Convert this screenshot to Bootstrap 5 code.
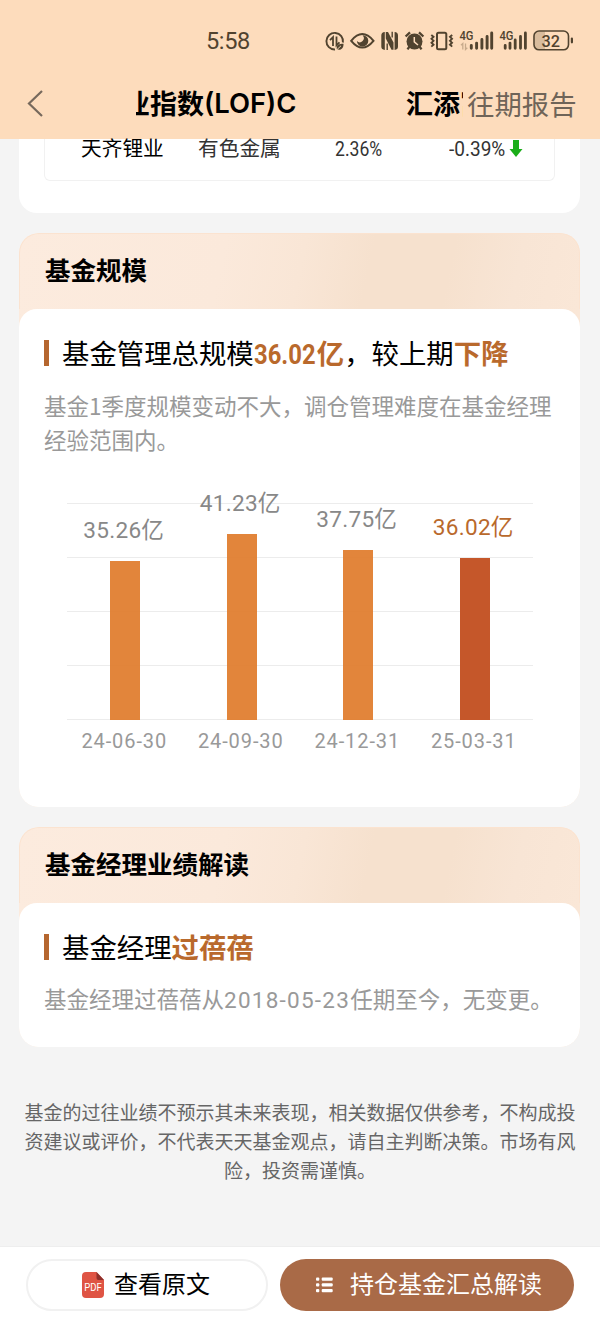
<!DOCTYPE html>
<html lang="zh-CN">
<head>
<meta charset="utf-8">
<meta name="viewport" content="width=device-width, initial-scale=1">
<title>基金季报解读</title>
<link rel="stylesheet" href="https://cdn.jsdelivr.net/npm/bootstrap@5.3.0/dist/css/bootstrap.min.css">
<style>
  body { background:#f4f4f4; color:#000; font-family:"Noto Sans CJK SC",sans-serif; height:1326px; overflow:hidden; }
  .num { font-family:Roboto,"Noto Sans CJK SC",sans-serif; }
  .accent, .val.accent { color:#b9692c; }
  .app-head { background:#fddcbc; height:139px; flex:none; }
  .status { height:78px; padding:4px 22px 0 206px; color:#51432f; }
  .clock { font-size:23.6px; line-height:24px; letter-spacing:-.4px; }
  .title-row { height:50px; padding:0 23px 0 27px; }
  .ticker { margin-left:92px; width:327px; font-size:27px; line-height:48px; font-weight:700; }
  .ticker .run { margin-left:-13px; }
  .ticker .latin { font-family:Inter,sans-serif; font-size:27.4px; font-weight:600; width:93px; flex:none; }
  .ticker .gap { width:109px; flex:none; }
  .past { font-size:27.4px; line-height:48px; color:#6f6458; margin-left:4px; }
  .panel { margin:0 20px 0 19px; border-radius:18px; background:#fff; flex:none; }
  .holdings { height:74px; border-radius:0 0 18px 18px; padding:0 25px; }
  .hold-row { height:42px; border:1px solid #f1f1f1; border-top:0; border-radius:0 0 6px 6px; font-size:20.7px; line-height:17px; color:#333; }
  .narrow { display:inline-block; transform:scaleX(.85); transform-origin:0 50%; line-height:20px; }
  .topic { border-radius:20px 20px 0 0; border:1px solid #fbe3d0; border-bottom:0; height:76px; padding:0 25px; font-size:25.5px; line-height:70px; font-weight:700;
    background:linear-gradient(102deg,#fcebde 0%,#fbe9db 36%,#f9e6d6 50%,#f6e1ce 62%,#f6e1ce 76%,#f8e5d5 88%,#fae7d7 100%); }
  .panel-topic { background:linear-gradient(90deg,#fcebde 0%,#f6e1ce 65%,#fae7d7 100%); border-radius:20px; overflow:hidden; }
  .inner { background:#fff; border-radius:18px; padding:26px 25px 0; }
  .headline { font-size:27.4px; line-height:36px; height:36px; white-space:nowrap; }
  .headline::before { content:""; width:5px; height:26px; background:#b5662f; margin-right:13px; flex:none; }
  .headline > span { margin-top:-2px; }
  .total { display:inline-block; width:63px; height:30px; line-height:30px; transform:scaleX(.87); transform-origin:0 50%; }
  .note { font-size:22.5px; line-height:34px; color:#999; white-space:nowrap; }
  .note .num { letter-spacing:1.25px; }
  .chart { margin:0 22px 0 23px; height:217px; background:repeating-linear-gradient(to bottom,#ececec 0 1px,transparent 1px 54px); }
  .column { width:30px; flex:none; background:#df7b2aeb; }
  .column.now { background:#c5572a; }
  .val { font-size:22.6px; line-height:24px; color:#888; margin-bottom:18px; letter-spacing:.25px; white-space:nowrap; position:relative; left:-1.5px; }
  .days { margin:0 23px 0 22px; font-size:20px; line-height:24px; color:#999; letter-spacing:.9px; }
  .legal { font-size:19px; line-height:29px; color:#666; text-align:center; margin:50px 24px 0; white-space:nowrap; }
  .actions { height:80px; background:#fff; border-top:1px solid #eee; padding:12px 26px 0; flex:none; }
  .actions .btn { height:52px; border-radius:26px; font-size:24px; line-height:24px; padding:0; }
  .actions .btn span { margin-top:-4px; }
  .btn-doc { width:242px; border:2px solid #f1f1f1; color:#000; background:#fff; }
  .btn-doc svg { margin-left:-2px; }
  .btn-sum { width:294px; background:#a96a47; color:#fff; border:0; }
  .btn-sum svg { margin-left:4px; }
</style>
<script src="https://cdn.jsdelivr.net/npm/bootstrap@5.3.0/dist/js/bootstrap.bundle.min.js"></script>
</head>
<body class="d-flex flex-column">
<header class="app-head">
  <div class="status d-flex align-items-center justify-content-between">
    <span class="clock num">5:58</span>
    <svg width="256" height="26" viewBox="322 27.5 256 26" fill="none" stroke="#51432f">
      <!-- data saver -->
      <path d="M342.9 42A8.3 8.3 0 1 0 335 49" stroke-width="1.9"/>
      <path d="M333 45.5V36.6L330 39.6M336.5 36V44.8L339.5 41.8" stroke-width="1.8"/>
      <path d="M336.8 48.8C336 43.8 339.3 43.4 343.5 43.2C343.7 47.5 341 50.5 336.8 48.8Z" fill="#51432f" stroke="none"/>
      <path d="M336 50L341 45.3" stroke="#fddcbc" stroke-width=".9"/>
      <!-- eye -->
      <path d="M351.2 40.3Q362.3 26.8 373.5 40.3Q362.3 53.8 351.2 40.3Z" stroke-width="2"/>
      <path d="M362.5 34.7A5.7 5.7 0 1 1 356.9 40.5A4 4 0 0 0 362.5 34.7Z" fill="#51432f" stroke="none"/>
      <!-- NFC -->
      <path d="M381.3 35Q381.3 31.6 384.8 31.4V49.4Q381.3 49.2 381.3 46ZM398 46Q398 49.2 394.6 49.4V31.4Q398 31.6 398 35ZM385.8 31.4H388L393.5 42V49.3H391.5L385.8 38Z" fill="#51432f" stroke="none"/>
      <path d="M387.2 49.5V43M392.2 31.3V37" stroke-width="1.4"/>
      <!-- alarm -->
      <circle cx="414.5" cy="41" r="8" fill="#51432f" stroke="none"/>
      <path d="M405.6 36L410 31.9M423.4 36L419 31.9M409.5 46L407.5 48.8M419.5 46L421.5 48.8" stroke-width="2.3"/>
      <path d="M414.3 36.5V41.4L418 44.5" stroke="#fddcbc" stroke-width="1.5"/>
      <!-- vibrate -->
      <rect x="437" y="32.3" width="9.3" height="16.5" rx="1.5" stroke-width="2"/>
      <path d="M431.3 34.5L433.5 36.4L431.5 38.3L433.5 40.3L431.5 42.3L433.5 44.2L431.3 46.1M452.2 34.5L450 36.4L452 38.3L450 40.3L452 42.3L450 44.2L452.2 46.1" stroke-width="1.9"/>
      <!-- signal 1 -->
      <path d="M471.3 45V47.8M476.6 42.6V47.8M481.9 39V47.8M487.1 36V47.8M491.7 32.5V47.8" stroke-width="2.9" stroke-linecap="round"/>
      <path d="M462.8 49V43L461 44.8M465.5 43V49L467.3 47.2" stroke="#c7aa8c" stroke-width="1.3"/>
      <!-- signal 2 -->
      <path d="M505.2 45V47.8M510 42.6V47.8M515.2 39.5V47.8M520.5 36V47.8M525.4 32.5V47.8" stroke-width="2.8" stroke-linecap="round"/>
      <g class="num" font-size="12" font-weight="500" fill="#51432f" stroke="none">
        <text x="459.5" y="39.5" textLength="14" lengthAdjust="spacingAndGlyphs">4G</text>
        <text x="499.5" y="39.5" textLength="14" lengthAdjust="spacingAndGlyphs">4G</text>
      </g>
      <!-- battery -->
      <path d="M545 31V49H538.5Q534.5 49 534.5 45V35Q534.5 31 538.5 31Z" fill="#d9bc9d" stroke="none"/>
      <rect x="534" y="30.5" width="34.5" height="18.8" rx="5" stroke-width="1.6"/>
      <path d="M571.9 38V41.8" stroke-width="2.2" stroke-linecap="round"/>
      <text class="num" x="541.5" y="46" font-size="17" font-weight="500" fill="#51432f" stroke="none" textLength="18.5" lengthAdjust="spacingAndGlyphs">32</text>
    </svg>
  </div>
  <div class="title-row d-flex align-items-center">
    <svg width="17" height="28" viewBox="0 0 17 28" fill="none" stroke="#77695c" stroke-width="2.2"><path d="M15 2L2 14.5L15 27"/></svg>
    <div class="ticker overflow-hidden text-nowrap flex-shrink-0"><div class="run d-flex"><span>业指数</span><span class="latin">(LOF)C</span><span class="gap"></span><span>汇添富</span></div></div>
    <span class="past text-nowrap">往期报告</span>
  </div>
</header>

<section class="panel holdings">
  <div class="hold-row d-flex">
    <span class="text-black" style="width:153px;padding-left:36px">天齐锂业</span>
    <span style="width:137px">有色金属</span>
    <span style="width:114px"><span class="num narrow">2.36%</span></span>
    <span style="width:60px"><span class="num narrow" style="transform:scaleX(.92)">-0.39%</span></span>
    <svg width="14" height="20" viewBox="0 0 14 20"><path d="M4 1H10V10H13.5L7 18L.5 10H4Z" fill="#1aad19"/></svg>
  </div>
</section>

<section class="panel panel-topic" style="margin-top:20px;height:574px">
  <div class="topic">基金规模</div>
  <div class="inner" style="height:498px">
    <div class="headline d-flex align-items-center"><span>基金管理总规模<b class="accent"><span class="num total">36.02</span>亿</b>，较上期<b class="accent">下降</b></span></div>
    <div class="note" style="margin-top:17px">基金1季度规模变动不大，调仓管理难度在基金经理<br>经验范围内。</div>
    <div class="chart d-flex" style="margin-top:47px">
      <div class="flex-fill d-flex flex-column align-items-center justify-content-end" style="width:0"><div class="val num">35.26亿</div><div class="column" style="height:159px"></div></div>
      <div class="flex-fill d-flex flex-column align-items-center justify-content-end" style="width:0"><div class="val num">41.23亿</div><div class="column" style="height:186px"></div></div>
      <div class="flex-fill d-flex flex-column align-items-center justify-content-end" style="width:0"><div class="val num">37.75亿</div><div class="column" style="height:170px"></div></div>
      <div class="flex-fill d-flex flex-column align-items-center justify-content-end" style="width:0"><div class="val num accent">36.02亿</div><div class="column now" style="height:162px"></div></div>
    </div>
    <div class="days num d-flex text-center" style="margin-top:9px">
      <span class="col">24-06-30</span><span class="col">24-09-30</span><span class="col">24-12-31</span><span class="col">25-03-31</span>
    </div>
  </div>
</section>

<section class="panel panel-topic" style="margin-top:20px;height:220px">
  <div class="topic">基金经理业绩解读</div>
  <div class="inner" style="height:144px">
    <div class="headline d-flex align-items-center"><span>基金经理<b class="accent">过蓓蓓</b></span></div>
    <div class="note" style="margin-top:16px">基金经理过蓓蓓从<span class="num">2018-05-23</span>任期至今，无变更。</div>
  </div>
</section>

<p class="legal">基金的过往业绩不预示其未来表现，相关数据仅供参考，不构成投<br>资建议或评价，不代表天天基金观点，请自主判断决策。市场有风<br>险，投资需谨慎。</p>

<footer class="actions d-flex justify-content-between mt-auto">
  <button class="btn btn-doc d-flex align-items-center justify-content-center">
    <svg width="22" height="26" viewBox="0 0 22 26" style="margin-right:10px"><path d="M4 0H14.5L22 8V22Q22 26 18 26H4Q0 26 0 22V4Q0 0 4 0Z" fill="#df5444"/><path d="M14.5 0L22 8H16.5Q14.5 8 14.5 6Z" fill="#8e302b"/><text x="2.3" y="19.3" class="num" font-size="10" fill="#fff" textLength="17.5" lengthAdjust="spacingAndGlyphs">PDF</text></svg>
    <span>查看原文</span>
  </button>
  <button class="btn btn-sum d-flex align-items-center justify-content-center">
    <svg width="17" height="16" viewBox="0 0 17 16" fill="#fff" style="margin-right:17px"><rect x="0" y=".5" width="3.3" height="3.3" rx="1"/><rect x="0" y="6.3" width="3.3" height="3.3" rx="1"/><rect x="0" y="12" width="3.3" height="3.3" rx="1"/><rect x="5.7" y=".5" width="11" height="3.3" rx="1"/><rect x="5.7" y="6.3" width="11" height="3.3" rx="1"/><rect x="5.7" y="12" width="11" height="3.3" rx="1"/></svg>
    <span>持仓基金汇总解读</span>
  </button>
</footer>
</body>
</html>
